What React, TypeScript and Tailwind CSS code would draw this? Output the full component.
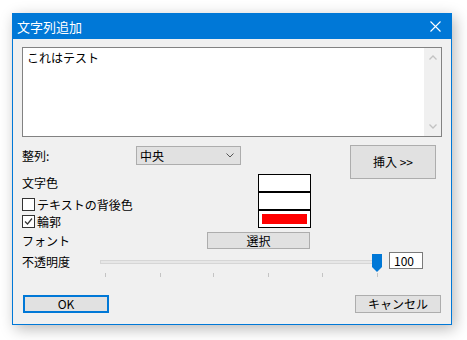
const font = "font-['Noto_Sans_CJK_JP','Noto_Sans',sans-serif]";

function Checkbox({ checked }: { checked: boolean }) {
  return (
    <span className="flex h-[13px] w-[13px] items-center justify-center border border-[#333333] bg-white">
      {checked && (
        <svg width="11" height="11" viewBox="0 0 11 11">
          <path d="M2 5.5 L4.5 8 L9 2.5" fill="none" stroke="#333333" strokeWidth="1.2" />
        </svg>
      )}
    </span>
  );
}

function Button({ label, primary, className }: { label: string; primary?: boolean; className: string }) {
  return (
    <div
      className={`flex items-center justify-center bg-[#e1e1e1] text-[12px] leading-none text-black ${
        primary ? "border-2 border-[#0078d7]" : "border border-[#adadad]"
      } ${className}`}
    >
      {label}
    </div>
  );
}

const ticks = [5, 60, 113, 168, 222, 277];

export default function App() {
  return (
    <div className={`h-[340px] w-[467px] bg-white pl-[12px] pt-[13px] ${font}`}>
      <div className="flex h-[312px] w-[440px] flex-col border border-[#0078d7] bg-[#f0f0f0] shadow-[3px_4px_14px_rgba(0,0,0,0.28)]">
        {/* title bar */}
        <div className="flex h-[25px] shrink-0 items-center justify-between bg-[#0078d7] pl-[4px] pr-[10px]">
          <span className="text-[13px] leading-none text-white">文字列追加</span>
          <svg width="11" height="11" viewBox="0 0 11 11">
            <path d="M0.5 0.5 L10.5 10.5 M10.5 0.5 L0.5 10.5" stroke="white" strokeWidth="1.1" />
          </svg>
        </div>

        <div className="flex flex-col px-[9px] text-[12px] text-black">
          {/* text area */}
          <div className="mt-[8px] flex h-[90px] w-[420px] border border-[#828282] bg-white">
            <div className="flex-1 pl-[4px] pt-[3px] text-[12px] leading-[14px]">これはテスト</div>
            <div className="flex w-[17px] flex-col items-center justify-between bg-[#f0f0f0] py-[7px]">
              <svg width="8" height="5" viewBox="0 0 8 5">
                <path d="M0.5 4.5 L4 1 L7.5 4.5" fill="none" stroke="#c2c2c2" strokeWidth="1.3" />
              </svg>
              <svg width="8" height="5" viewBox="0 0 8 5">
                <path d="M0.5 0.5 L4 4 L7.5 0.5" fill="none" stroke="#c2c2c2" strokeWidth="1.3" />
              </svg>
            </div>
          </div>

          {/* options + insert */}
          <div className="mt-[8px] flex items-start justify-between">
            <div className="flex flex-col pt-[1px]">
              <div className="flex h-[19px] items-center">
                <span className="w-[114px] leading-none">整列:</span>
                <div className="flex h-[19px] w-[105px] items-center justify-between border border-[#adadad] bg-[#e1e1e1] pl-[3px] pr-[6px]">
                  <span className="leading-none">中央</span>
                  <svg width="8" height="5" viewBox="0 0 8 5">
                    <path d="M0.5 0.5 L4 4 L7.5 0.5" fill="none" stroke="#555555" strokeWidth="1" />
                  </svg>
                </div>
              </div>

              <div className="mt-[9px] flex">
                <div className="flex w-[236px] flex-col">
                  <span className="mt-[2px] h-[14px] leading-[14px]">文字色</span>
                  <div className="mt-[8px] flex h-[13px] items-center gap-[2px]">
                    <Checkbox checked={false} />
                    <span className="leading-none">テキストの背後色</span>
                  </div>
                  <div className="mt-[4px] flex h-[13px] items-center gap-[2px]">
                    <Checkbox checked />
                    <span className="leading-none">輪郭</span>
                  </div>
                </div>
                <div className="flex w-[53px] flex-col">
                  <div className="h-[18px] border border-black bg-white" />
                  <div className="h-[18px] border border-black bg-white" />
                  <div className="h-[18px] border border-black bg-white px-[3px] pt-[3px]">
                    <div className="h-[10px] bg-[#ff0000]" />
                  </div>
                </div>
              </div>

              <div className="mt-[4px] flex h-[17px] items-center">
                <span className="w-[185px] leading-none">フォント</span>
                <Button label="選択" className="h-[17px] w-[103px]" />
              </div>
            </div>

            <Button label="挿入 >>" className="mr-[6px] h-[34px] w-[86px]" />
          </div>

          {/* opacity */}
          <div className="mt-[3px] flex h-[26px] items-start">
            <span className="mt-[3px] w-[78px] leading-[14px]">不透明度</span>
            <div className="relative h-[26px] w-[283px]">
              <div className="absolute left-0 top-[8px] h-[4px] w-[278px] border border-[#d6d6d6] bg-[#e7e7e7]" />
              <svg className="absolute left-[272px] top-[2px]" width="10" height="18" viewBox="0 0 10 18">
                <polygon points="0,0 10,0 10,13 5,18 0,13" fill="#0078d7" />
              </svg>
              {ticks.map((t) => (
                <div key={t} className="absolute top-[21px] h-[4px] w-px bg-[#c4c4c4]" style={{ left: t }} />
              ))}
            </div>
            <div className="ml-[6px] flex h-[17px] w-[34px] items-center border border-[#7a7a7a] bg-white pl-[4px] leading-none">
              100
            </div>
          </div>

          {/* buttons */}
          <div className="mt-[17px] flex justify-between px-[1px]">
            <Button label="OK" primary className="h-[18px] w-[86px]" />
            <Button label="キャンセル" className="h-[18px] w-[86px]" />
          </div>
        </div>
      </div>
    </div>
  );
}
